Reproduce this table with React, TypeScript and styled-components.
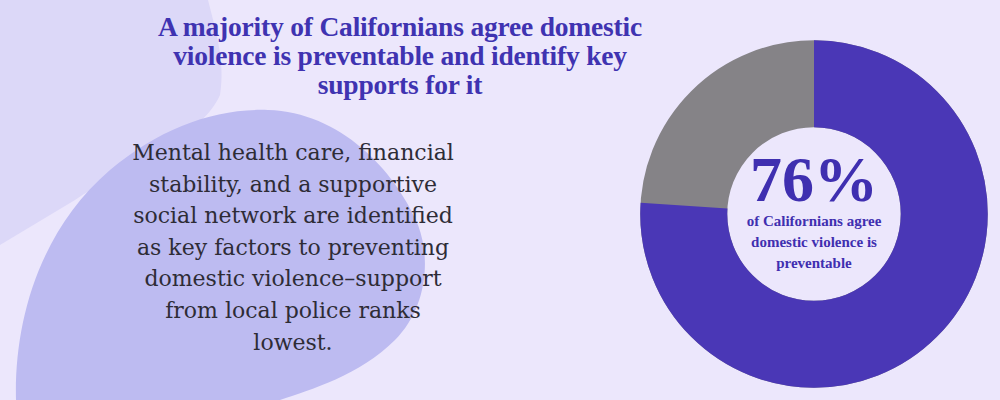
import { createGlobalStyle, styled } from "styled-components";

const GlobalStyle = createGlobalStyle`
  html, body {
    margin: 0;
    padding: 0;
  }
  body {
    background: #ece7fc;
    font-family: "Liberation Serif", serif;
  }
`;

const Page = styled.div`
  position: relative;
  width: 1000px;
  height: 400px;
  overflow: hidden;
  background: #ece7fc;
`;

const Backdrop = styled.svg`
  position: absolute;
  inset: 0;
  z-index: 0;
`;

const Content = styled.div`
  position: relative;
  z-index: 1;
  display: grid;
  grid-template-columns: 640px 348px;
  height: 100%;
`;

const LeftColumn = styled.div`
  display: flex;
  flex-direction: column;
  padding-top: 12px;
`;

const Title = styled.h1`
  margin: 0 0 0 140px;
  width: 520px;
  text-align: center;
  font-family: "Liberation Serif", serif;
  font-weight: 700;
  font-size: 27.5px;
  line-height: 29px;
  color: #3f33b1;
  letter-spacing: -0.2px;
`;

const Body = styled.p`
  margin: 38px 0 0 128px;
  width: 330px;
  text-align: center;
  font-family: "DejaVu Serif", serif;
  font-size: 22px;
  line-height: 31.6px;
  color: #2e2c36;
`;

const ChartColumn = styled.div`
  padding-top: 40px;
`;

const Donut = styled.div`
  display: grid;
  width: 348px;
  height: 348px;
  & > * {
    grid-area: 1 / 1;
  }
`;

const Center = styled.div`
  display: flex;
  flex-direction: column;
  align-items: center;
  justify-content: center;
  text-align: center;
  color: #3f2fb0;
  padding-bottom: 2px;
`;

const Percent = styled.div`
  font-family: "Liberation Serif", serif;
  font-weight: 700;
  font-size: 64px;
  line-height: 54px;
`;

const Caption = styled.div`
  margin-top: 4px;
  width: 170px;
  font-family: "Liberation Serif", serif;
  font-weight: 700;
  font-size: 15px;
  line-height: 21px;
`;

const share = 0.76;
const radius = 130.25;
const circumference = 2 * Math.PI * radius;

export default function App() {
  return (
    <Page>
      <GlobalStyle />
      <Backdrop width="1000" height="400" viewBox="0 0 1000 400">
        <path
          d="M0 0 H208 C214 25 226 60 220 95 C200 140 120 170 75 200 C50 215 25 230 0 245 Z"
          fill="#dcd8f8"
        />
        <path
          d="M16 400 C14 320 40 230 110 170 C160 128 215 108 268 110 C340 112 395 170 418 225 C432 262 425 310 395 340 C360 375 310 390 280 400 Z"
          fill="#bdbbf1"
        />
      </Backdrop>
      <Content>
        <LeftColumn>
          <Title>
            A majority of Californians agree domestic violence is preventable
            and identify key supports for it
          </Title>
          <Body>
            Mental health care, financial stability, and a supportive social
            network are identified as key factors to preventing domestic
            violence–support from local police ranks lowest.
          </Body>
        </LeftColumn>
        <ChartColumn>
          <Donut>
            <svg width="348" height="348" viewBox="0 0 348 348">
              <circle
                cx="174"
                cy="174"
                r={radius}
                fill="none"
                stroke="#858387"
                strokeWidth="87"
              />
              <circle
                cx="174"
                cy="174"
                r={radius}
                fill="none"
                stroke="#4a37b6"
                strokeWidth="87"
                strokeDasharray={`${circumference * share} ${circumference}`}
                transform="rotate(-90 174 174)"
              />
            </svg>
            <Center>
              <Percent>76%</Percent>
              <Caption>
                of Californians agree domestic violence is preventable
              </Caption>
            </Center>
          </Donut>
        </ChartColumn>
      </Content>
    </Page>
  );
}
